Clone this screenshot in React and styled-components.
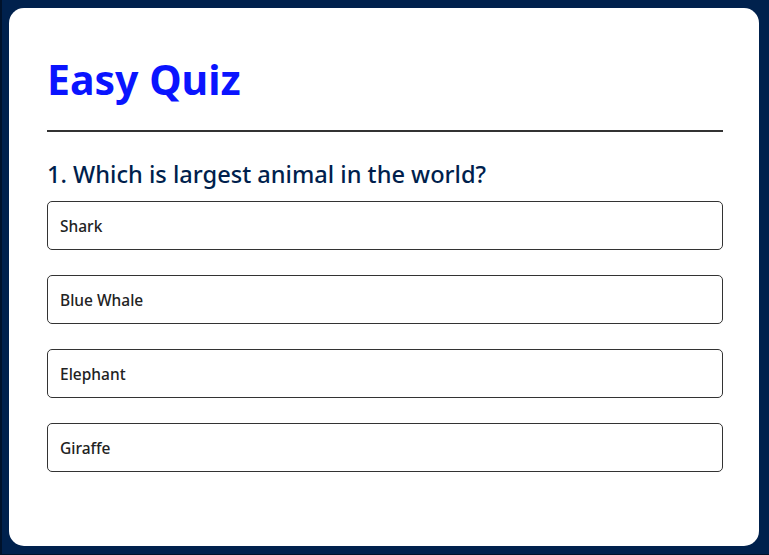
import React, { useState } from "react";
import styled, { createGlobalStyle } from "styled-components";

const GlobalStyle = createGlobalStyle`
  html, body {
    margin: 0;
    padding: 0;
    background: #00214d;
  }
  body {
    font-family: "Noto Sans", "Open Sans", sans-serif;
  }
`;

const Page = styled.div`
  box-sizing: border-box;
  width: 769px;
  height: 555px;
  padding: 8px 10px 8px 9px;
  border-left: 2px solid #00122b;
  border-bottom: 1px solid #00122b;
  background: #00214d;
  display: flex;
`;

const Card = styled.div`
  flex: 1;
  background: #ffffff;
  border-radius: 15px;
  padding: 38px 36px 0 38px;
  margin-left: -2px;
`;

const Title = styled.h1`
  margin: 0;
  padding-top: 4px;
  font-size: 41px;
  font-weight: 700;
  color: #0a14ff;
  line-height: 58px;
`;

const Divider = styled.hr`
  margin: 22px 0 0 0;
  border: none;
  height: 2px;
  background: #333333;
`;

const Question = styled.h2`
  margin: 26px 0 0 0;
  font-size: 23.6px;
  font-weight: 500;
  color: #001f4d;
  line-height: 32px;
`;

const OptionList = styled.ul`
  list-style: none;
  margin: 11px 0 0 0;
  padding: 0;
  display: flex;
  flex-direction: column;
  gap: 25px;
`;

const Option = styled.li`
  box-sizing: border-box;
  height: 49px;
  display: flex;
  align-items: center;
  padding: 0 12px;
  border: 1px solid #333333;
  border-radius: 5px;
  font-size: 15.5px;
  font-weight: 500;
  color: #222222;
  cursor: pointer;
  background: ${({ selected }) => (selected ? "#e8f0ff" : "#ffffff")};
`;

const options = ["Shark", "Blue Whale", "Elephant", "Giraffe"];

export default function App() {
  const [selected, setSelected] = useState(null);
  return (
    <>
      <GlobalStyle />
      <Page>
        <Card>
          <Title>Easy Quiz</Title>
          <Divider />
          <Question>1. Which is largest animal in the world?</Question>
          <OptionList>
            {options.map((o, i) => (
              <Option key={o} selected={selected === i} onClick={() => setSelected(i)}>
                {o}
              </Option>
            ))}
          </OptionList>
        </Card>
      </Page>
    </>
  );
}
